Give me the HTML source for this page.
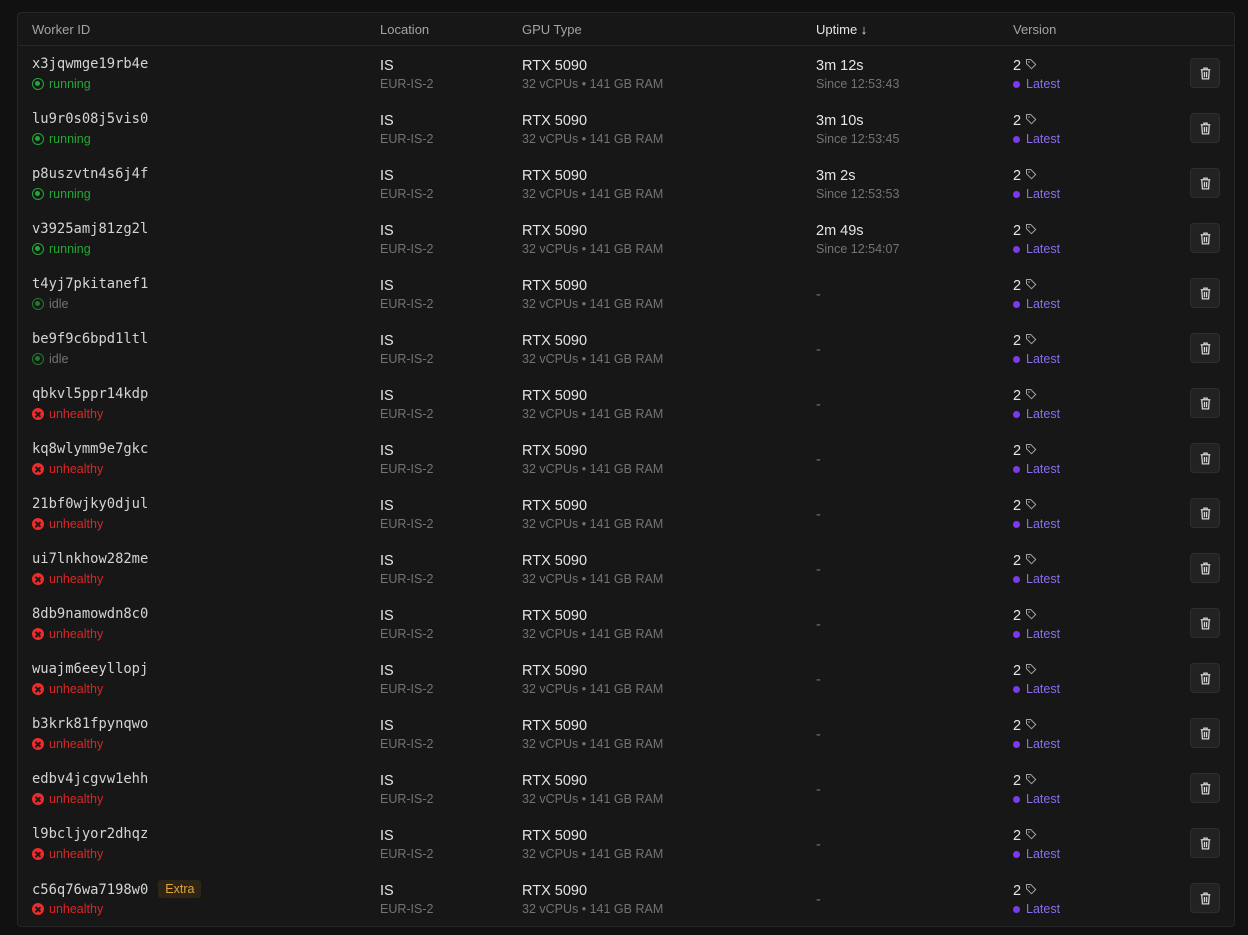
<!DOCTYPE html>
<html><head><meta charset="utf-8"><style>
*{margin:0;padding:0;box-sizing:border-box}
body{width:1248px;height:935px;background:#111111;font-family:"Liberation Sans",sans-serif;overflow:hidden;position:relative}
.card{position:absolute;left:17px;top:12px;width:1218px;height:915px;background:#171717;border:1px solid #262626;border-radius:4px}
.hdr{position:absolute;left:0;top:0;width:100%;height:33px;border-bottom:1px solid #262626;font-size:13px;color:#a3a3a3}
.hdr span{position:absolute;top:9px}
.row{position:absolute;left:0;width:100%;height:55px}
.l1{position:absolute;top:11.5px;font-size:14.5px;color:#e5e5e5;white-space:nowrap}
.l2{position:absolute;top:31px;font-size:12.5px;color:#737373;white-space:nowrap}
.mono{font-family:"DejaVu Sans Mono","Liberation Mono",monospace;font-size:13.8px;color:#d4d4d4;top:10px}
.dash{top:21px;color:#737373}
.st{display:flex;align-items:center;gap:5px}
.run{color:#22a834}.idle{color:#737373}.bad{color:#dc2626}
.dot{width:12px;height:12px;border-radius:50%;display:inline-block;position:relative}
.run .dot,.idle .dot{border:1.5px solid currentColor}
.idle .dot{border-color:#1f7a2c}
.run .dot::after,.idle .dot::after{content:"";position:absolute;left:2px;top:2px;width:5px;height:5px;border-radius:50%;background:currentColor}
.idle .dot::after{background:#1f7a2c}
.bad .dot{background:#ef2b2b}
.bad .dot::before,.bad .dot::after{content:"";position:absolute;left:5.25px;top:2.5px;width:1.5px;height:7px;background:#1a1a1a;transform:rotate(45deg)}
.bad .dot::after{transform:rotate(-45deg)}
.lat{color:#8b6cf0;display:flex;align-items:center;gap:6px}
.lat i{width:7px;height:7px;border-radius:50%;background:#7c3aed;display:inline-block}
.btn{position:absolute;left:1172px;top:12px;width:30px;height:30px;background:#222;border:1px solid #2e2e2e;border-radius:4px;display:flex;align-items:center;justify-content:center}
.extra{display:inline-block;margin-left:10px;background:#2d2516;color:#e0a43a;font-family:"Liberation Sans",sans-serif;font-size:12.5px;padding:2px 7px;border-radius:3px;position:relative;top:-1px}
</style></head><body>
<svg width="0" height="0" style="position:absolute"><defs>
<symbol id="tr" viewBox="0 0 14 14"><path d="M2.5 3.5h9M5.5 3.5V2h3v1.5M3.5 3.5l.6 8.5h5.8l.6-8.5M6 5.5v5M8 5.5v5" fill="none" stroke="#d4d4d4" stroke-width="1.2"/></symbol>
<symbol id="tag" viewBox="0 0 12 12"><path d="M1.5 1.5h4.2l5 5-4.2 4.2-5-5z" fill="none" stroke="#a3a3a3" stroke-width="1"/><circle cx="4" cy="4" r=".8" fill="#a3a3a3"/></symbol>
</defs></svg>
<div class="card">
<div class="hdr"><span style="left:14px">Worker ID</span><span style="left:362px">Location</span><span style="left:504px">GPU Type</span><span style="left:798px;color:#e5e5e5">Uptime ↓</span><span style="left:995px">Version</span></div>

<div class="row" style="top:33px"><div class="l1 mono" style="left:14px">x3jqwmge19rb4e</div><div class="l2 st run" style="left:14px"><span class="dot"></span>running</div><div class="l1" style="left:362px">IS</div><div class="l2" style="left:362px">EUR-IS-2</div><div class="l1" style="left:504px">RTX 5090</div><div class="l2" style="left:504px">32 vCPUs • 141 GB RAM</div><div class="l1" style="left:798px">3m 12s</div><div class="l2" style="left:798px">Since 12:53:43</div><div class="l1" style="left:995px">2 <svg width="12" height="12"><use href="#tag"/></svg></div><div class="l2 lat" style="left:995px"><i></i>Latest</div><div class="btn"><svg width="15" height="15"><use href="#tr"/></svg></div></div>

<div class="row" style="top:88px"><div class="l1 mono" style="left:14px">lu9r0s08j5vis0</div><div class="l2 st run" style="left:14px"><span class="dot"></span>running</div><div class="l1" style="left:362px">IS</div><div class="l2" style="left:362px">EUR-IS-2</div><div class="l1" style="left:504px">RTX 5090</div><div class="l2" style="left:504px">32 vCPUs • 141 GB RAM</div><div class="l1" style="left:798px">3m 10s</div><div class="l2" style="left:798px">Since 12:53:45</div><div class="l1" style="left:995px">2 <svg width="12" height="12"><use href="#tag"/></svg></div><div class="l2 lat" style="left:995px"><i></i>Latest</div><div class="btn"><svg width="15" height="15"><use href="#tr"/></svg></div></div>

<div class="row" style="top:143px"><div class="l1 mono" style="left:14px">p8uszvtn4s6j4f</div><div class="l2 st run" style="left:14px"><span class="dot"></span>running</div><div class="l1" style="left:362px">IS</div><div class="l2" style="left:362px">EUR-IS-2</div><div class="l1" style="left:504px">RTX 5090</div><div class="l2" style="left:504px">32 vCPUs • 141 GB RAM</div><div class="l1" style="left:798px">3m 2s</div><div class="l2" style="left:798px">Since 12:53:53</div><div class="l1" style="left:995px">2 <svg width="12" height="12"><use href="#tag"/></svg></div><div class="l2 lat" style="left:995px"><i></i>Latest</div><div class="btn"><svg width="15" height="15"><use href="#tr"/></svg></div></div>

<div class="row" style="top:198px"><div class="l1 mono" style="left:14px">v3925amj81zg2l</div><div class="l2 st run" style="left:14px"><span class="dot"></span>running</div><div class="l1" style="left:362px">IS</div><div class="l2" style="left:362px">EUR-IS-2</div><div class="l1" style="left:504px">RTX 5090</div><div class="l2" style="left:504px">32 vCPUs • 141 GB RAM</div><div class="l1" style="left:798px">2m 49s</div><div class="l2" style="left:798px">Since 12:54:07</div><div class="l1" style="left:995px">2 <svg width="12" height="12"><use href="#tag"/></svg></div><div class="l2 lat" style="left:995px"><i></i>Latest</div><div class="btn"><svg width="15" height="15"><use href="#tr"/></svg></div></div>

<div class="row" style="top:253px"><div class="l1 mono" style="left:14px">t4yj7pkitanef1</div><div class="l2 st idle" style="left:14px"><span class="dot"></span>idle</div><div class="l1" style="left:362px">IS</div><div class="l2" style="left:362px">EUR-IS-2</div><div class="l1" style="left:504px">RTX 5090</div><div class="l2" style="left:504px">32 vCPUs • 141 GB RAM</div><div class="l1 dash" style="left:798px">-</div><div class="l1" style="left:995px">2 <svg width="12" height="12"><use href="#tag"/></svg></div><div class="l2 lat" style="left:995px"><i></i>Latest</div><div class="btn"><svg width="15" height="15"><use href="#tr"/></svg></div></div>

<div class="row" style="top:308px"><div class="l1 mono" style="left:14px">be9f9c6bpd1ltl</div><div class="l2 st idle" style="left:14px"><span class="dot"></span>idle</div><div class="l1" style="left:362px">IS</div><div class="l2" style="left:362px">EUR-IS-2</div><div class="l1" style="left:504px">RTX 5090</div><div class="l2" style="left:504px">32 vCPUs • 141 GB RAM</div><div class="l1 dash" style="left:798px">-</div><div class="l1" style="left:995px">2 <svg width="12" height="12"><use href="#tag"/></svg></div><div class="l2 lat" style="left:995px"><i></i>Latest</div><div class="btn"><svg width="15" height="15"><use href="#tr"/></svg></div></div>

<div class="row" style="top:363px"><div class="l1 mono" style="left:14px">qbkvl5ppr14kdp</div><div class="l2 st bad" style="left:14px"><span class="dot"></span>unhealthy</div><div class="l1" style="left:362px">IS</div><div class="l2" style="left:362px">EUR-IS-2</div><div class="l1" style="left:504px">RTX 5090</div><div class="l2" style="left:504px">32 vCPUs • 141 GB RAM</div><div class="l1 dash" style="left:798px">-</div><div class="l1" style="left:995px">2 <svg width="12" height="12"><use href="#tag"/></svg></div><div class="l2 lat" style="left:995px"><i></i>Latest</div><div class="btn"><svg width="15" height="15"><use href="#tr"/></svg></div></div>

<div class="row" style="top:418px"><div class="l1 mono" style="left:14px">kq8wlymm9e7gkc</div><div class="l2 st bad" style="left:14px"><span class="dot"></span>unhealthy</div><div class="l1" style="left:362px">IS</div><div class="l2" style="left:362px">EUR-IS-2</div><div class="l1" style="left:504px">RTX 5090</div><div class="l2" style="left:504px">32 vCPUs • 141 GB RAM</div><div class="l1 dash" style="left:798px">-</div><div class="l1" style="left:995px">2 <svg width="12" height="12"><use href="#tag"/></svg></div><div class="l2 lat" style="left:995px"><i></i>Latest</div><div class="btn"><svg width="15" height="15"><use href="#tr"/></svg></div></div>

<div class="row" style="top:473px"><div class="l1 mono" style="left:14px">21bf0wjky0djul</div><div class="l2 st bad" style="left:14px"><span class="dot"></span>unhealthy</div><div class="l1" style="left:362px">IS</div><div class="l2" style="left:362px">EUR-IS-2</div><div class="l1" style="left:504px">RTX 5090</div><div class="l2" style="left:504px">32 vCPUs • 141 GB RAM</div><div class="l1 dash" style="left:798px">-</div><div class="l1" style="left:995px">2 <svg width="12" height="12"><use href="#tag"/></svg></div><div class="l2 lat" style="left:995px"><i></i>Latest</div><div class="btn"><svg width="15" height="15"><use href="#tr"/></svg></div></div>

<div class="row" style="top:528px"><div class="l1 mono" style="left:14px">ui7lnkhow282me</div><div class="l2 st bad" style="left:14px"><span class="dot"></span>unhealthy</div><div class="l1" style="left:362px">IS</div><div class="l2" style="left:362px">EUR-IS-2</div><div class="l1" style="left:504px">RTX 5090</div><div class="l2" style="left:504px">32 vCPUs • 141 GB RAM</div><div class="l1 dash" style="left:798px">-</div><div class="l1" style="left:995px">2 <svg width="12" height="12"><use href="#tag"/></svg></div><div class="l2 lat" style="left:995px"><i></i>Latest</div><div class="btn"><svg width="15" height="15"><use href="#tr"/></svg></div></div>

<div class="row" style="top:583px"><div class="l1 mono" style="left:14px">8db9namowdn8c0</div><div class="l2 st bad" style="left:14px"><span class="dot"></span>unhealthy</div><div class="l1" style="left:362px">IS</div><div class="l2" style="left:362px">EUR-IS-2</div><div class="l1" style="left:504px">RTX 5090</div><div class="l2" style="left:504px">32 vCPUs • 141 GB RAM</div><div class="l1 dash" style="left:798px">-</div><div class="l1" style="left:995px">2 <svg width="12" height="12"><use href="#tag"/></svg></div><div class="l2 lat" style="left:995px"><i></i>Latest</div><div class="btn"><svg width="15" height="15"><use href="#tr"/></svg></div></div>

<div class="row" style="top:638px"><div class="l1 mono" style="left:14px">wuajm6eeyllopj</div><div class="l2 st bad" style="left:14px"><span class="dot"></span>unhealthy</div><div class="l1" style="left:362px">IS</div><div class="l2" style="left:362px">EUR-IS-2</div><div class="l1" style="left:504px">RTX 5090</div><div class="l2" style="left:504px">32 vCPUs • 141 GB RAM</div><div class="l1 dash" style="left:798px">-</div><div class="l1" style="left:995px">2 <svg width="12" height="12"><use href="#tag"/></svg></div><div class="l2 lat" style="left:995px"><i></i>Latest</div><div class="btn"><svg width="15" height="15"><use href="#tr"/></svg></div></div>

<div class="row" style="top:693px"><div class="l1 mono" style="left:14px">b3krk81fpynqwo</div><div class="l2 st bad" style="left:14px"><span class="dot"></span>unhealthy</div><div class="l1" style="left:362px">IS</div><div class="l2" style="left:362px">EUR-IS-2</div><div class="l1" style="left:504px">RTX 5090</div><div class="l2" style="left:504px">32 vCPUs • 141 GB RAM</div><div class="l1 dash" style="left:798px">-</div><div class="l1" style="left:995px">2 <svg width="12" height="12"><use href="#tag"/></svg></div><div class="l2 lat" style="left:995px"><i></i>Latest</div><div class="btn"><svg width="15" height="15"><use href="#tr"/></svg></div></div>

<div class="row" style="top:748px"><div class="l1 mono" style="left:14px">edbv4jcgvw1ehh</div><div class="l2 st bad" style="left:14px"><span class="dot"></span>unhealthy</div><div class="l1" style="left:362px">IS</div><div class="l2" style="left:362px">EUR-IS-2</div><div class="l1" style="left:504px">RTX 5090</div><div class="l2" style="left:504px">32 vCPUs • 141 GB RAM</div><div class="l1 dash" style="left:798px">-</div><div class="l1" style="left:995px">2 <svg width="12" height="12"><use href="#tag"/></svg></div><div class="l2 lat" style="left:995px"><i></i>Latest</div><div class="btn"><svg width="15" height="15"><use href="#tr"/></svg></div></div>

<div class="row" style="top:803px"><div class="l1 mono" style="left:14px">l9bcljyor2dhqz</div><div class="l2 st bad" style="left:14px"><span class="dot"></span>unhealthy</div><div class="l1" style="left:362px">IS</div><div class="l2" style="left:362px">EUR-IS-2</div><div class="l1" style="left:504px">RTX 5090</div><div class="l2" style="left:504px">32 vCPUs • 141 GB RAM</div><div class="l1 dash" style="left:798px">-</div><div class="l1" style="left:995px">2 <svg width="12" height="12"><use href="#tag"/></svg></div><div class="l2 lat" style="left:995px"><i></i>Latest</div><div class="btn"><svg width="15" height="15"><use href="#tr"/></svg></div></div>

<div class="row" style="top:858px"><div class="l1 mono" style="left:14px">c56q76wa7198w0<span class="extra">Extra</span></div><div class="l2 st bad" style="left:14px"><span class="dot"></span>unhealthy</div><div class="l1" style="left:362px">IS</div><div class="l2" style="left:362px">EUR-IS-2</div><div class="l1" style="left:504px">RTX 5090</div><div class="l2" style="left:504px">32 vCPUs • 141 GB RAM</div><div class="l1 dash" style="left:798px">-</div><div class="l1" style="left:995px">2 <svg width="12" height="12"><use href="#tag"/></svg></div><div class="l2 lat" style="left:995px"><i></i>Latest</div><div class="btn"><svg width="15" height="15"><use href="#tr"/></svg></div></div>

</div>
</body></html>
